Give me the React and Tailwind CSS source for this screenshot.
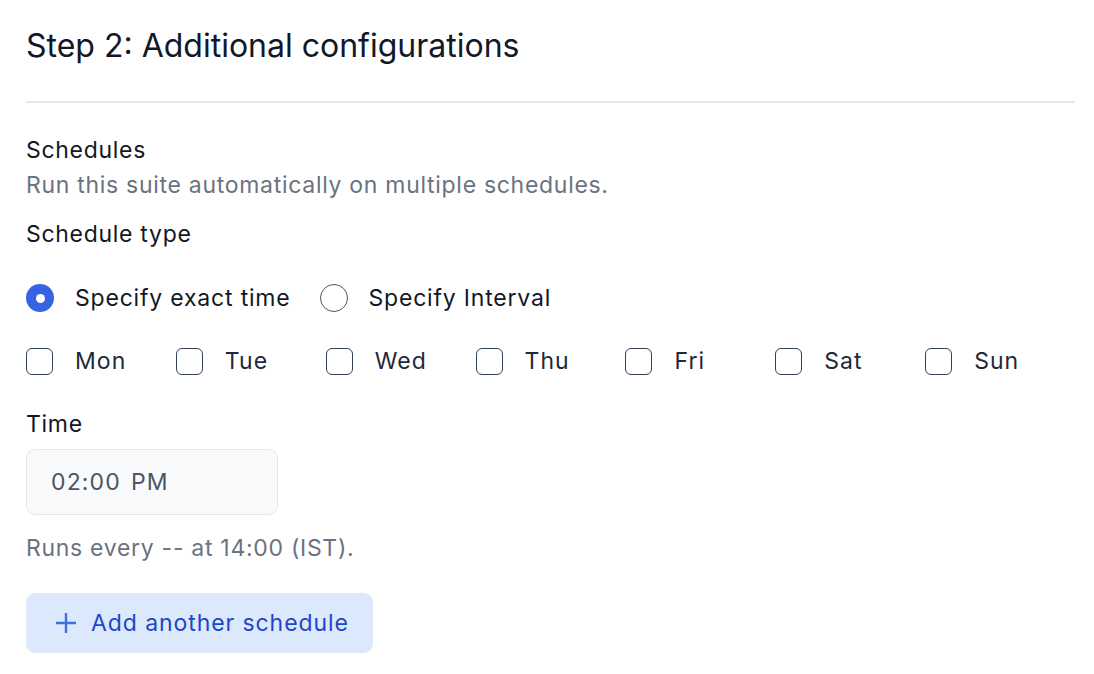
import { useState } from "react";

const days = ["Mon", "Tue", "Wed", "Thu", "Fri", "Sat", "Sun"];

const Radio = ({ checked, label, onClick }) => (
  <button type="button" onClick={onClick} className="flex items-center gap-[21px]">
    {checked ? (
      <span className="flex items-center justify-center w-[28px] h-[28px] rounded-full bg-[#3563e3]">
        <span className="w-[9px] h-[9px] rounded-full bg-white"></span>
      </span>
    ) : (
      <span className="w-[28px] h-[28px] rounded-full border-[1.5px] border-[#4b5563] bg-white"></span>
    )}
    <span className="text-[23px] leading-[32px] tracking-[0.035em] text-[#111827]">{label}</span>
  </button>
);

export default function App() {
  const [type, setType] = useState("exact");
  const [checked, setChecked] = useState([]);

  const toggleDay = (d) =>
    setChecked((prev) => (prev.includes(d) ? prev.filter((x) => x !== d) : [...prev, d]));

  return (
    <div
      className="min-h-screen bg-white pl-[26px] pr-[19px] pt-[26px] tracking-[0.044em]"
      style={{ fontFamily: "Inter, 'Noto Sans', sans-serif" }}
    >
      <h2 className="text-[32px] leading-[40px] tracking-[0em] text-[#111827] font-normal">
        Step 2: Additional configurations
      </h2>
      <div className="mt-[35px] border-t-2 border-[#e5e7eb]"></div>

      <div className="mt-[31px] flex flex-col">
        <div className="text-[23px] leading-[32px] text-[#111827]">Schedules</div>
        <div className="mt-[3px] text-[23px] leading-[32px] text-[#6b7280]">
          Run this suite automatically on multiple schedules.
        </div>
        <div className="mt-[17px] text-[23px] leading-[32px] text-[#111827]">Schedule type</div>

        {/* schedule type radios */}
        <div className="mt-[32px] flex items-center gap-[29px]">
          <Radio checked={type === "exact"} label="Specify exact time" onClick={() => setType("exact")} />
          <Radio checked={type === "interval"} label="Specify Interval" onClick={() => setType("interval")} />
        </div>

        {/* days */}
        <div className="mt-[31px] flex items-center">
          {days.map((d) => (
            <label key={d} className="w-[152px] flex items-center gap-[22px] cursor-pointer">
              <span
                onClick={() => toggleDay(d)}
                className={
                  checked.includes(d)
                    ? "w-[27px] h-[27px] rounded-[6px] border-[1.5px] border-[#3563e3] bg-[#3563e3]"
                    : "w-[27px] h-[27px] rounded-[6px] border-[1.5px] border-[#334155] bg-white"
                }
              ></span>
              <span className="text-[23px] leading-[32px] tracking-[0.045em] text-[#1e293b]">{d}</span>
            </label>
          ))}
        </div>

        <div className="mt-[31px] text-[23px] leading-[32px] text-[#111827]">Time</div>
        <div className="mt-[9px] w-[252px] h-[66px] flex items-center px-[24px] rounded-[9px] border border-[#e5e7eb] bg-[#f9fafb]">
          <span className="text-[23px] text-[#4b5563] tracking-[0.05em]">02:00</span>
          <span className="ml-[10px] text-[23px] text-[#4b5563] tracking-[0.05em]">PM</span>
        </div>
        <div className="mt-[17px] text-[23px] leading-[32px] text-[#6b7280]">
          Runs every -- at 14:00 (IST).
        </div>

        <div>
          <button
            type="button"
            className="mt-[29px] h-[60px] w-[347px] flex items-center gap-[14px] pl-[29px] rounded-[9px] bg-[#dce8fb]"
          >
            <svg width="22" height="22" viewBox="0 0 22 22" fill="none">
              <path d="M11 1v20M1 11h20" stroke="#3f6fe0" strokeWidth="2.4" />
            </svg>
            <span className="text-[23px] leading-[32px] tracking-[0.04em] text-[#1d46c8]">
              Add another schedule
            </span>
          </button>
        </div>
      </div>
    </div>
  );
}
